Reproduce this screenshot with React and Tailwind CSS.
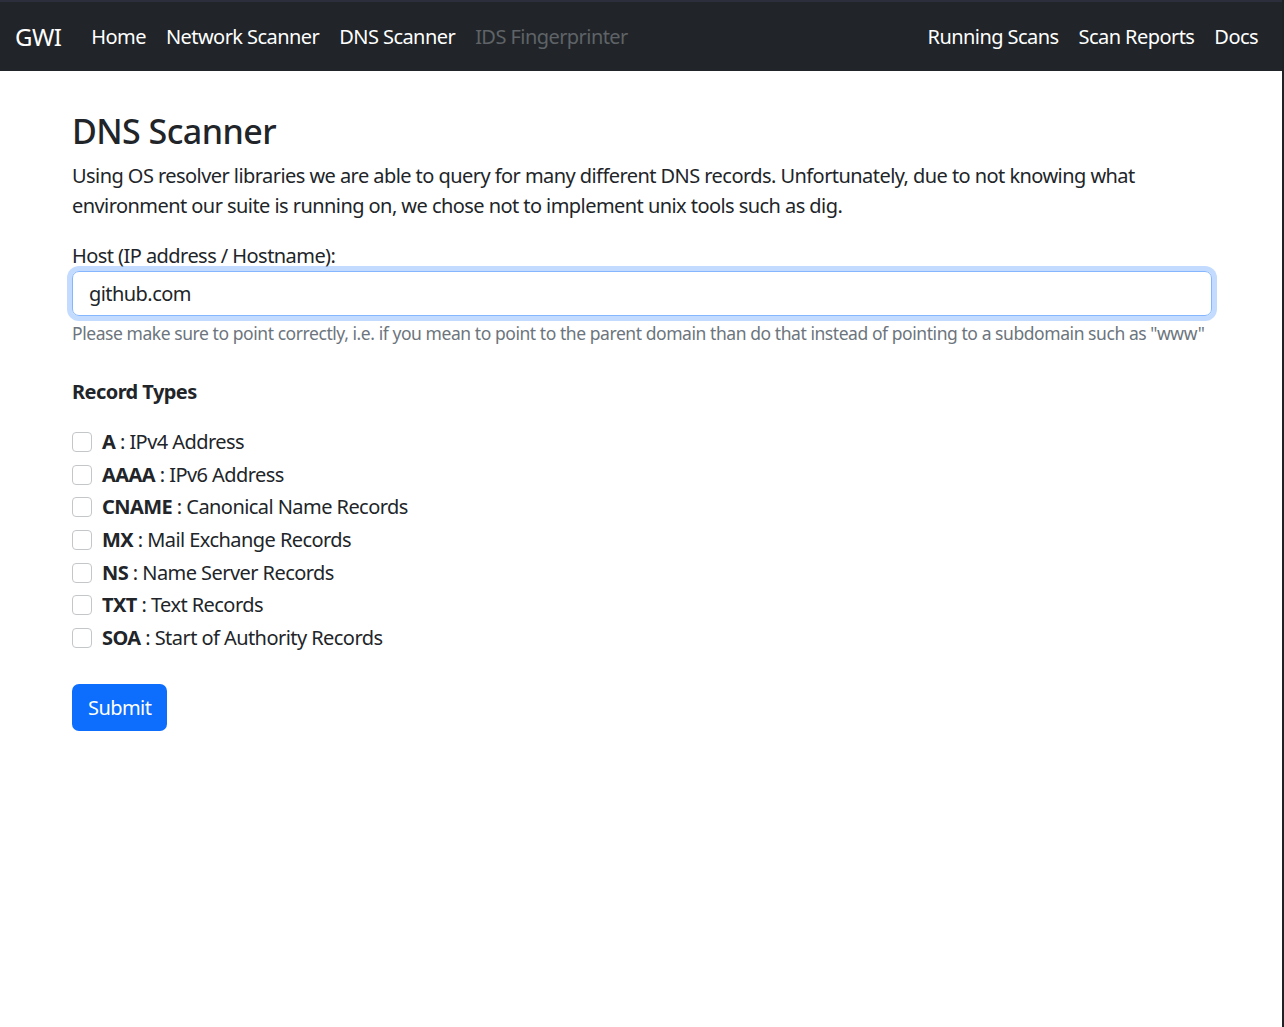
import { useState } from "react";

const records = [
    { code: "A", label: "IPv4 Address" },
    { code: "AAAA", label: "IPv6 Address" },
    { code: "CNAME", label: "Canonical Name Records" },
    { code: "MX", label: "Mail Exchange Records" },
    { code: "NS", label: "Name Server Records" },
    { code: "TXT", label: "Text Records" },
    { code: "SOA", label: "Start of Authority Records" },
]

function Navbar() {
    const linkClass = "px-[10px] text-white"
    return (
        <nav className="h-[71px] bg-[#212529] border-t-2 border-[#2c2f3b] flex items-center pl-[15px] pr-[24px] text-[20px]">
            <a className="text-[24px] text-white mr-[20px]">GWI</a>
            <div className="flex items-center">
                <a className={linkClass}>Home</a>
                <a className={linkClass}>Network Scanner</a>
                <a className={linkClass}>DNS Scanner</a>
                <a className="px-[10px] text-[#5f6367]">IDS Fingerprinter</a>
            </div>
            <div className="flex items-center ml-auto">
                <a className={linkClass}>Running Scans</a>
                <a className={linkClass}>Scan Reports</a>
                <a className="pl-[10px] text-white">Docs</a>
            </div>
        </nav>
    )
}

function App() {
    const [host, setHost] = useState("github.com")
    const [checked, setChecked] = useState({})

    const toggle = (code) => {
        setChecked({ ...checked, [code]: !checked[code] })
    }

    return (
        <div className="min-h-[1027px] bg-white border-r-2 border-[#202124] text-[#212529] text-[20px] leading-[30px] tracking-[-0.028em]" style={{ fontFamily: '"Noto Sans", sans-serif' }}>
            <Navbar />
            <div className="w-[1140px] ml-[72px] pt-[40px]">
                <h3 className="text-[34px] leading-[40px] font-medium mb-[10px]">DNS Scanner</h3>
                <p className="mb-[20px]">Using OS resolver libraries we are able to query for many different DNS records. Unfortunately, due to not knowing what environment our suite is running on, we chose not to implement unix tools such as dig.</p>

                <label className="block">Host (IP address / Hostname):</label>
                <input
                    type="text"
                    autoFocus
                    value={host}
                    onChange={(e) => setHost(e.target.value)}
                    className="w-full h-[45px] px-[16px] border border-[#86b7fe] rounded-[7px] outline-none shadow-[0_0_0_5px_rgba(13,110,253,0.25)] text-[20px] caret-black"
                />
                <div className="text-[17.5px] leading-[26px] text-[#6c757d] mt-[4px] whitespace-nowrap tracking-[-0.025em]">Please make sure to point correctly, i.e. if you mean to point to the parent domain than do that instead of pointing to a subdomain such as "www"</div>

                <div className="font-bold mt-[31px] mb-[19px]">Record Types</div>

                <div className="flex flex-col">
                    {records.map(item => {
                        return (
                            <label key={item.code} className="flex items-center h-[32.6px] cursor-pointer">
                                <input type="checkbox" className="hidden" checked={!!checked[item.code]} onChange={() => toggle(item.code)} />
                                <span className={checked[item.code] ? "w-[20px] h-[20px] rounded-[4px] border border-[#0d6efd] bg-[#0d6efd] mr-[10px]" : "w-[20px] h-[20px] rounded-[4px] border border-[#c4c7ca] bg-white mr-[10px]"}></span>
                                <span><b>{item.code}</b> : {item.label}</span>
                            </label>
                        )
                    })}
                </div>

                <button className="mt-[30px] bg-[#0d6efd] text-white rounded-[7px] px-[16px] h-[47px] text-[20px]">Submit</button>
            </div>
        </div>
    );
}

export default App;
